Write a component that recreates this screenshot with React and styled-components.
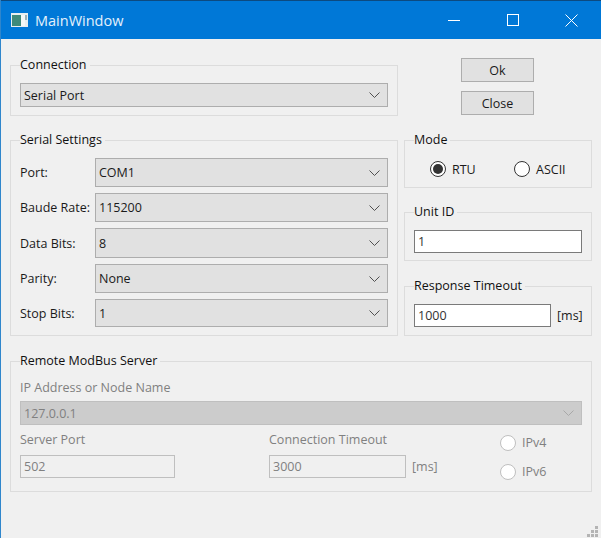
import React from "react";
import styled, { createGlobalStyle } from "styled-components";

const Global = createGlobalStyle`
  html, body { margin: 0; padding: 0; background: #f0f0f0; }
  * { box-sizing: border-box; }
`

const Window = styled.div`
  width: 601px;
  height: 538px;
  position: relative;
  overflow: hidden;
  display: flex;
  flex-direction: column;
  background: #f0f0f0;
  font-family: "Open Sans", "Noto Sans", sans-serif;
  font-size: 12.5px;
  color: #1a1a1a;
  border-left: 1px solid #2f86cc;
`
const TitleBar = styled.div`
  height: 39px;
  margin-left: -1px;
  flex: none;
  display: flex;
  align-items: center;
  background: #0078d7;
  border-top: 1px solid #0c4a80;
  color: #fff;
  font-size: 14.5px;
  padding-left: 11px;
`
const TitleText = styled.span`
  margin-left: 7px;
  flex: 1;
  color: #e4f1fb;
`
const WinButton = styled.div`
  width: 59px;
  height: 100%;
  display: flex;
  align-items: center;
  justify-content: center;
`
const Body = styled.div`
  display: flex;
  flex-direction: column;
  padding: 17px 9px 0 9px;
`
const Columns = styled.div`
  display: flex;
  gap: 6px;
`
const LeftColumn = styled.div`
  width: 388px;
  display: flex;
  flex-direction: column;
  gap: 15px;
`
const RightColumn = styled.div`
  width: 188px;
  display: flex;
  flex-direction: column;
`
const Group = styled.fieldset`
  margin: ${p => p.$top || 0}px 0 0 0;
  padding: 9px 9px ${p => p.$bottom || 8}px 9px;
  border: 1px solid #dcdcdc;
  min-width: 0;
`
const GroupTitle = styled.legend`
  padding: 0 3px 0 0;
  margin-left: 0;
  line-height: 18px;
  color: #111;
`
const ButtonStack = styled.div`
  display: flex;
  flex-direction: column;
  align-items: flex-end;
  gap: 9px;
  padding: 2px 58px 7px 0;
`
const PushButton = styled.div`
  width: 73px;
  height: 24px;
  display: flex;
  align-items: center;
  justify-content: center;
  background: #e1e1e1;
  border: 1px solid #adadad;
`
const ComboBox = styled.div`
  height: ${p => p.$h || 24}px;
  flex: 1;
  min-width: 0;
  display: flex;
  align-items: center;
  justify-content: space-between;
  padding: 0 7px 0 3px;
  background: ${p => (p.$disabled ? "#cccccc" : "#e1e1e1")};
  border: 1px solid ${p => (p.$disabled ? "#bfbfbf" : "#adadad")};
  color: ${p => (p.$disabled ? "#808080" : "inherit")};
`
const Chevron = ({ disabled }) => (
  <svg width="11" height="6" viewBox="0 0 11 6" fill="none">
    <path d="M.5.5l5 5 5-5" stroke={disabled ? "#a8a8a8" : "#505050"} />
  </svg>
)
const SerialRows = styled.div`
  display: flex;
  flex-direction: column;
  gap: 6px;
`
const Row = styled.div`
  display: flex;
  align-items: center;
`
const RowLabel = styled.span`
  width: 75px;
  flex: none;
  white-space: nowrap;
`
const RadioRow = styled.div`
  display: flex;
  align-items: center;
  padding: 1px 0 0 16px;
  height: 21px;
`
const RadioItem = styled.div`
  display: flex;
  align-items: center;
  gap: 6px;
  width: ${p => p.$w || "auto"};
  color: ${p => (p.$disabled ? "#808080" : "inherit")};
`
const RadioCircle = styled.span`
  width: 16px;
  height: 16px;
  flex: none;
  border-radius: 50%;
  background: #fff;
  border: 1px solid ${p => (p.$disabled ? "#bfbfbf" : "#333")};
  display: flex;
  align-items: center;
  justify-content: center;
  &::after {
    content: "";
    display: ${p => (p.$checked ? "block" : "none")};
    width: 10px;
    height: 10px;
    border-radius: 50%;
    background: #333;
  }
`
const TextInput = styled.div`
  height: 23px;
  width: ${p => p.$w || "100%"};
  flex: none;
  display: flex;
  align-items: center;
  padding: 0 3px;
  background: ${p => (p.$disabled ? "#f0f0f0" : "#fff")};
  border: 1px solid ${p => (p.$disabled ? "#bfbfbf" : "#7a7a7a")};
  color: ${p => (p.$disabled ? "#808080" : "#333")};
`
const Unit = styled.span`
  margin-left: 6px;
  color: ${p => (p.$disabled ? "#808080" : "inherit")};
`
const DimLabel = styled.div`
  color: #808080;
  line-height: 18px;
`
const ServerFields = styled.div`
  display: grid;
  grid-template-columns: 249px 231px 1fr;
  margin-top: 6px;
`
const FieldStack = styled.div`
  display: flex;
  flex-direction: column;
  gap: 6px;
`
const IpStack = styled.div`
  display: flex;
  flex-direction: column;
  gap: 4px;
`
const RadioStack = styled.div`
  display: flex;
  flex-direction: column;
  gap: 12px;
  padding-top: 3px;
`
const Grip = styled.svg`
  position: absolute;
  right: 3px;
  bottom: 1px;
`

const serialRows = [
  { label: "Port:", value: "COM1", h: 29 },
  { label: "Baude Rate:", value: "115200", h: 29 },
  { label: "Data Bits:", value: "8", h: 30 },
  { label: "Parity:", value: "None", h: 29 },
  { label: "Stop Bits:", value: "1", h: 28 },
]

export default function App() {
  return (
    <Window>
      <Global />
      <TitleBar>
        <svg width="17" height="14" viewBox="0 0 17 14">
          <rect width="17" height="14" fill="#e8eef0" />
          <rect x="1" y="2" width="9" height="11" fill="#3f8a7a" />
          <rect x="10" y="2" width="4" height="11" fill="#f4f8f8" />
          <rect x="14" y="2" width="2" height="5" fill="#9ab0b8" />
        </svg>
        <TitleText>MainWindow</TitleText>
        <WinButton>
          <svg width="12" height="12" viewBox="0 0 12 12"><path d="M0 6.5h12" stroke="#fff" /></svg>
        </WinButton>
        <WinButton>
          <svg width="12" height="12" viewBox="0 0 12 12" fill="none"><rect x=".5" y=".5" width="11" height="11" stroke="#fff" /></svg>
        </WinButton>
        <WinButton>
          <svg width="13" height="13" viewBox="0 0 13 13" fill="none"><path d="M.5.5l12 12M12.5.5l-12 12" stroke="#fff" /></svg>
        </WinButton>
      </TitleBar>
      <Body>
        <Columns>
          <LeftColumn>
            <Group>
              <GroupTitle>Connection</GroupTitle>
              <Row>
                <ComboBox>Serial Port<Chevron /></ComboBox>
              </Row>
            </Group>
            <Group>
              <GroupTitle>Serial Settings</GroupTitle>
              <SerialRows>
                {serialRows.map(row => (
                  <Row key={row.label}>
                    <RowLabel>{row.label}</RowLabel>
                    <ComboBox $h={row.h}>{row.value}<Chevron /></ComboBox>
                  </Row>
                ))}
              </SerialRows>
            </Group>
          </LeftColumn>
          <RightColumn>
            <ButtonStack>
              <PushButton>Ok</PushButton>
              <PushButton>Close</PushButton>
            </ButtonStack>
            <Group $top={9}>
              <GroupTitle>Mode</GroupTitle>
              <RadioRow>
                <RadioItem $w="84px"><RadioCircle $checked />RTU</RadioItem>
                <RadioItem><RadioCircle />ASCII</RadioItem>
              </RadioRow>
            </Group>
            <Group $top={15} $bottom={7}>
              <GroupTitle>Unit ID</GroupTitle>
              <TextInput>1</TextInput>
            </Group>
            <Group $top={16} $bottom={8}>
              <GroupTitle>Response Timeout</GroupTitle>
              <Row>
                <TextInput $w="137px">1000</TextInput>
                <Unit>[ms]</Unit>
              </Row>
            </Group>
          </RightColumn>
        </Columns>
        <Group $top={16} $bottom={11}>
          <GroupTitle>Remote ModBus Server</GroupTitle>
          <IpStack>
            <DimLabel>IP Address or Node Name</DimLabel>
            <Row>
              <ComboBox $disabled>127.0.0.1<Chevron disabled /></ComboBox>
            </Row>
          </IpStack>
          <ServerFields>
            <FieldStack>
              <DimLabel>Server Port</DimLabel>
              <TextInput $disabled $w="155px">502</TextInput>
            </FieldStack>
            <FieldStack>
              <DimLabel>Connection Timeout</DimLabel>
              <Row>
                <TextInput $disabled $w="137px">3000</TextInput>
                <Unit $disabled>[ms]</Unit>
              </Row>
            </FieldStack>
            <RadioStack>
              <RadioItem $disabled><RadioCircle $disabled />IPv4</RadioItem>
              <RadioItem $disabled><RadioCircle $disabled />IPv6</RadioItem>
            </RadioStack>
          </ServerFields>
        </Group>
      </Body>
      <Grip width="11" height="11" viewBox="0 0 11 11" fill="#b4b4b4">
        <rect x="8" y="0" width="3" height="3" />
        <rect x="4" y="4" width="3" height="3" />
        <rect x="8" y="4" width="3" height="3" />
        <rect x="0" y="8" width="3" height="3" />
        <rect x="4" y="8" width="3" height="3" />
        <rect x="8" y="8" width="3" height="3" />
      </Grip>
    </Window>
  );
}
